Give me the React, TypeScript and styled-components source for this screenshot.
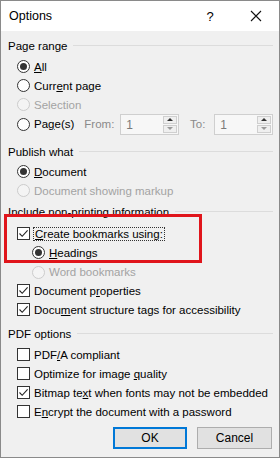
import React from "react";
import styled, { createGlobalStyle } from "styled-components";

const Global = createGlobalStyle`
  html, body { margin: 0; padding: 0; background: #f0f0f0; }
  body { font-family: "Liberation Sans", Arial, sans-serif; }
  * { box-sizing: border-box; }
`;

const Dialog = styled.div`
  width: 280px;
  height: 458px;
  border: 1px solid #8a8a8a;
  background: #f0f0f0;
  font-family: "Liberation Sans", Arial, sans-serif;
  font-size: 11.5px;
  color: #000;
  display: flex;
  flex-direction: column;
  overflow: hidden;
`;

const TitleBar = styled.div`
  height: 30px;
  background: #fff;
  display: flex;
  align-items: center;
  padding-left: 8px;
  font-size: 12.5px;
`;

const Title = styled.div`
  flex: 1;
`;

const TitleButton = styled.div`
  width: 46px;
  height: 30px;
  display: flex;
  align-items: center;
  justify-content: center;
  font-size: 13px;
`;

const Body = styled.div`
  padding: 5px 6px 0 7px;
  display: flex;
  flex-direction: column;
`;

const GroupHeader = styled.div<{ $mt?: number }>`
  height: 19px;
  margin-top: ${(p) => p.$mt ?? 0}px;
  display: flex;
  align-items: center;
  gap: 6px;
  &::after {
    content: "";
    flex: 1;
    height: 1px;
    background: #dcdcdc;
  }
`;

const Row = styled.div<{ $mt?: number; $indent?: number; $h?: number; $disabled?: boolean }>`
  height: ${(p) => p.$h ?? 19}px;
  margin-top: ${(p) => p.$mt ?? 0}px;
  padding-left: ${(p) => p.$indent ?? 9}px;
  display: flex;
  align-items: center;
  gap: 4px;
  color: ${(p) => (p.$disabled ? "#a3a3a3" : "#000")};
  white-space: nowrap;
`;

const RadioCircle = styled.span<{ $checked?: boolean; $disabled?: boolean }>`
  width: 13px;
  height: 13px;
  border-radius: 50%;
  border: 1px solid ${(p) => (p.$disabled ? "#cccccc" : "#333")};
  background: ${(p) => (p.$disabled ? "#f4f4f4" : "#fff")};
  display: flex;
  align-items: center;
  justify-content: center;
  flex: none;
  &::after {
    content: "";
    display: ${(p) => (p.$checked ? "block" : "none")};
    width: 7px;
    height: 7px;
    border-radius: 50%;
    background: #333;
  }
`;

const CheckBox = styled.span`
  width: 13px;
  height: 13px;
  border: 1px solid #333;
  background: #fff;
  display: flex;
  align-items: center;
  justify-content: center;
  flex: none;
`;

const U = styled.span`
  text-decoration: underline;
  text-underline-offset: 1px;
`;

const FocusLabel = styled.span`
  outline: 1px dotted #333;
  outline-offset: 0px;
  padding: 0 1px;
`;

const Small = styled.span<{ $ml?: number }>`
  color: #8a8a8a;
  margin-left: ${(p) => p.$ml ?? 0}px;
`;

const Spin = styled.div<{ $ml?: number }>`
  width: 61px;
  height: 21px;
  margin-left: ${(p) => p.$ml ?? 0}px;
  border: 1px solid #cfcfcf;
  background: #f7f7f7;
  display: flex;
  align-items: stretch;
  color: #7a7a7a;
`;

const SpinValue = styled.div`
  flex: 1;
  padding: 3px 0 0 5px;
  font-size: 12px;
`;

const SpinButtons = styled.div`
  width: 15px;
  display: flex;
  flex-direction: column;
  gap: 1px;
  padding: 1px 1px 1px 0;
`;

const SpinBtn = styled.div<{ $up?: boolean }>`
  flex: 1;
  border: 1px solid #cfcfcf;
  background: #efefef;
  display: flex;
  align-items: center;
  justify-content: center;
  &::after {
    content: "";
    width: 0;
    height: 0;
    border-left: 3px solid transparent;
    border-right: 3px solid transparent;
    ${(p) =>
      p.$up
        ? "border-bottom: 3px solid #333;"
        : "border-top: 3px solid #9a9a9a;"}
  }
`;

const Highlight = styled.div`
  position: relative;
  display: flex;
  flex-direction: column;
`;

const RedBox = styled.div`
  position: absolute;
  left: -4px;
  width: 198px;
  top: -7px;
  bottom: -1px;
  border: 3px solid #e0151b;
  pointer-events: none;
`;

const Buttons = styled.div`
  display: flex;
  justify-content: flex-end;
  gap: 10px;
  margin-top: 6px;
  padding-right: 1px;
`;

const Button = styled.div<{ $default?: boolean }>`
  width: ${(p) => (p.$default ? 74 : 75)}px;
  height: 22px;
  background: #e1e1e1;
  border: ${(p) => (p.$default ? "2px solid #0078d7" : "1px solid #adadad")};
  display: flex;
  align-items: center;
  justify-content: center;
  font-size: 12px;
`;

const Check = () => (
  <svg width="11" height="11" viewBox="0 0 11 11">
    <path d="M1.5 5.5 L4.2 8.3 L9.6 2.4" fill="none" stroke="#222" strokeWidth="1.1" />
  </svg>
);

const CloseIcon = () => (
  <svg width="12" height="12" viewBox="0 0 12 12">
    <path d="M1 1 L11 11 M11 1 L1 11" stroke="#111" strokeWidth="1.1" />
  </svg>
);

const Radio = ({
  checked,
  disabled,
  indent,
  mt,
  h,
  children,
}: {
  checked?: boolean;
  disabled?: boolean;
  indent?: number;
  mt?: number;
  h?: number;
  children: React.ReactNode;
}) => (
  <Row $indent={indent} $mt={mt} $h={h} $disabled={disabled}>
    <RadioCircle $checked={checked} $disabled={disabled} />
    <span>{children}</span>
  </Row>
);

const Checkbox = ({
  checked,
  mt,
  children,
}: {
  checked?: boolean;
  mt?: number;
  children: React.ReactNode;
}) => (
  <Row $mt={mt}>
    <CheckBox>{checked && <Check />}</CheckBox>
    <span>{children}</span>
  </Row>
);

const SpinBox = ({ ml }: { ml?: number }) => (
  <Spin $ml={ml}>
    <SpinValue>1</SpinValue>
    <SpinButtons>
      <SpinBtn $up />
      <SpinBtn />
    </SpinButtons>
  </Spin>
);

export default function App() {
  return (
    <>
      <Global />
      <Dialog>
        <TitleBar>
          <Title>Options</Title>
          <TitleButton>?</TitleButton>
          <TitleButton>
            <CloseIcon />
          </TitleButton>
        </TitleBar>
        <Body>
          <GroupHeader>Page range</GroupHeader>
          <Radio checked mt={2}>
            <U>A</U>ll
          </Radio>
          <Radio>
            Curr<U>e</U>nt page
          </Radio>
          <Radio disabled>Selection</Radio>
          <Row $h={20}>
            <RadioCircle />
            <span>
              Pa<U>g</U>e(s)
            </span>
            <Small $ml={6}>From:</Small>
            <SpinBox ml={2} />
            <Small $ml={7}>To:</Small>
            <SpinBox ml={5} />
          </Row>

          <GroupHeader $mt={8}>Publish what</GroupHeader>
          <Radio checked mt={1}>
            <U>D</U>ocument
          </Radio>
          <Radio disabled>Document showing markup</Radio>

          <GroupHeader $mt={2}>Include non-printing information</GroupHeader>
          <Highlight>
            <RedBox />
            <Row $mt={3}>
              <CheckBox>
                <Check />
              </CheckBox>
              <FocusLabel>
                <U>C</U>reate bookmarks using:
              </FocusLabel>
            </Row>
            <Radio checked indent={24}>
              <U>H</U>eadings
            </Radio>
          </Highlight>
          <Radio disabled indent={24} mt={1} h={18}>
            Word bookmarks
          </Radio>
          <Checkbox checked>
            Document p<U>r</U>operties
          </Checkbox>
          <Checkbox checked>
            Docu<U>m</U>ent structure tags for accessibility
          </Checkbox>

          <GroupHeader $mt={5}>PDF options</GroupHeader>
          <Checkbox mt={2}>
            PDF<U>/</U>A compliant
          </Checkbox>
          <Checkbox>
            Optimize for image <U>q</U>uality
          </Checkbox>
          <Checkbox checked>
            Bitmap te<U>x</U>t when fonts may not be embedded
          </Checkbox>
          <Checkbox>
            E<U>n</U>crypt the document with a password
          </Checkbox>

          <Buttons>
            <Button $default>OK</Button>
            <Button>Cancel</Button>
          </Buttons>
        </Body>
      </Dialog>
    </>
  );
}
